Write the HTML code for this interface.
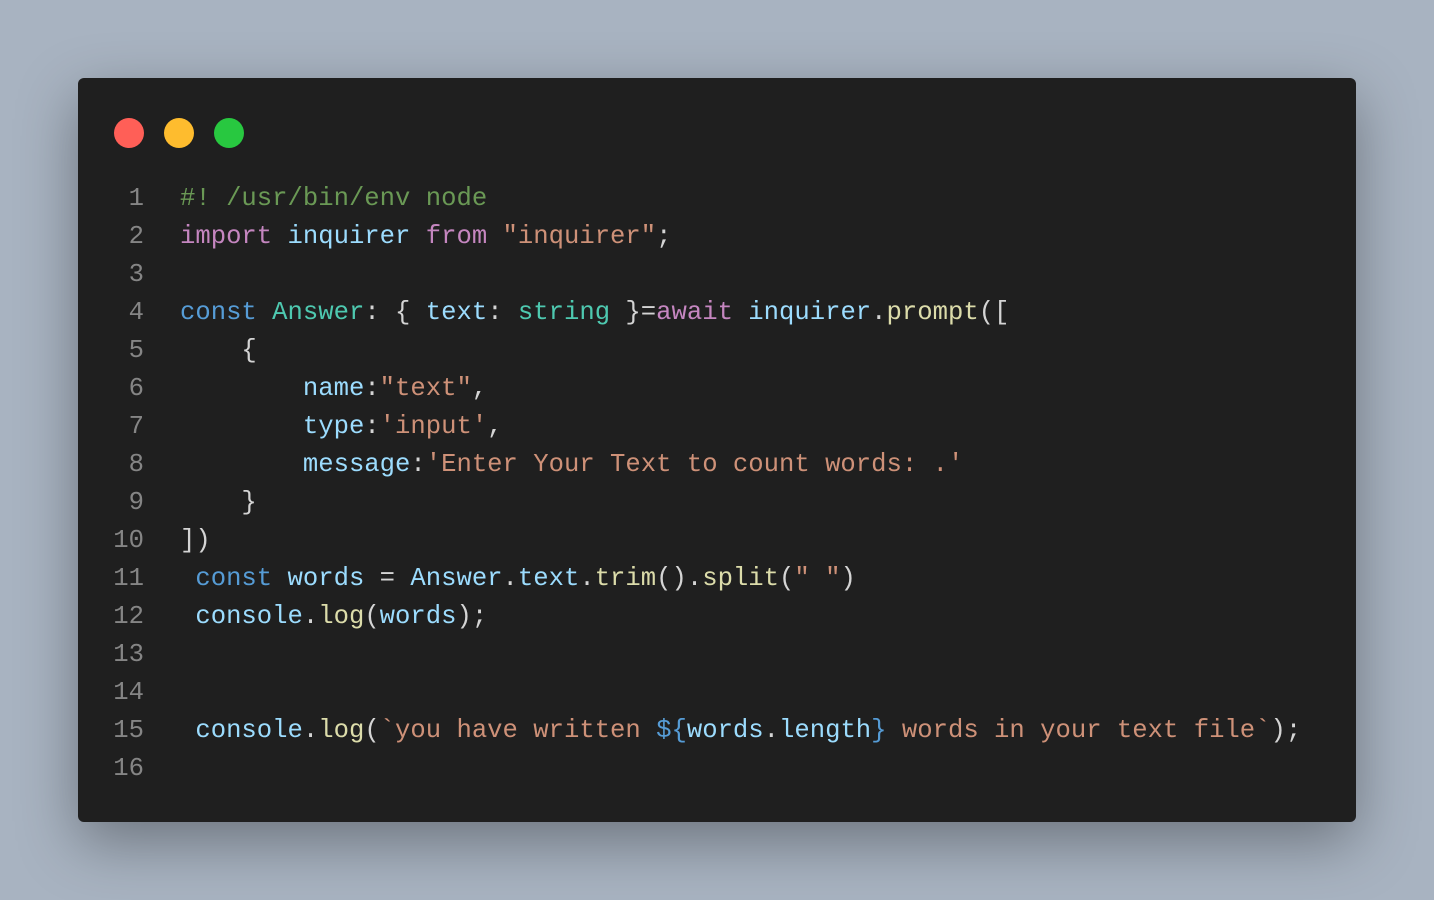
<!DOCTYPE html>
<html><head><meta charset="utf-8"><style>
html,body{margin:0;padding:0}
body{width:1434px;height:900px;background:#a8b3c1;position:relative;overflow:hidden;font-family:"Liberation Mono","DejaVu Sans Mono",monospace}
.win{position:absolute;left:78px;top:78px;width:1278px;height:744px;background:#1f1f1f;border-radius:6px;box-shadow:0 20px 60px rgba(0,0,0,.35)}
.dot{position:absolute;top:40px;width:30px;height:30px;border-radius:50%}
.code{position:absolute;left:0;top:102px;font-size:25.6px;line-height:38px;color:#d4d4d4;white-space:pre}
.ln{display:inline-block;width:66px;text-align:right;color:#858585;margin-right:36px}
.c{color:#6a9955}.k{color:#c586c0}.v{color:#9cdcfe}.s{color:#ce9178}.b{color:#569cd6}.t{color:#4ec9b0}.f{color:#dcdcaa}
</style></head><body>
<div class="win">
<div class="dot" style="left:36px;background:#ff5f57"></div>
<div class="dot" style="left:86px;background:#febc2e"></div>
<div class="dot" style="left:136px;background:#28c840"></div>
<div class="code"><span class="ln">1</span><span class="c">#! /usr/bin/env node</span>
<span class="ln">2</span><span class="k">import</span> <span class="v">inquirer</span> <span class="k">from</span> <span class="s">"inquirer"</span>;
<span class="ln">3</span>
<span class="ln">4</span><span class="b">const</span> <span class="t">Answer</span>: { <span class="v">text</span>: <span class="t">string</span> }=<span class="k">await</span> <span class="v">inquirer</span>.<span class="f">prompt</span>([
<span class="ln">5</span>    {
<span class="ln">6</span>        <span class="v">name</span>:<span class="s">"text"</span>,
<span class="ln">7</span>        <span class="v">type</span>:<span class="s">'input'</span>,
<span class="ln">8</span>        <span class="v">message</span>:<span class="s">'Enter Your Text to count words: .'</span>
<span class="ln">9</span>    }
<span class="ln">10</span>])
<span class="ln">11</span> <span class="b">const</span> <span class="v">words</span> = <span class="v">Answer</span>.<span class="v">text</span>.<span class="f">trim</span>().<span class="f">split</span>(<span class="s">" "</span>)
<span class="ln">12</span> <span class="v">console</span>.<span class="f">log</span>(<span class="v">words</span>);
<span class="ln">13</span>
<span class="ln">14</span>
<span class="ln">15</span> <span class="v">console</span>.<span class="f">log</span>(<span class="s">`you have written </span><span class="b">${</span><span class="v">words</span>.<span class="v">length</span><span class="b">}</span><span class="s"> words in your text file`</span>);
<span class="ln">16</span></div>
</div>
</body></html>
